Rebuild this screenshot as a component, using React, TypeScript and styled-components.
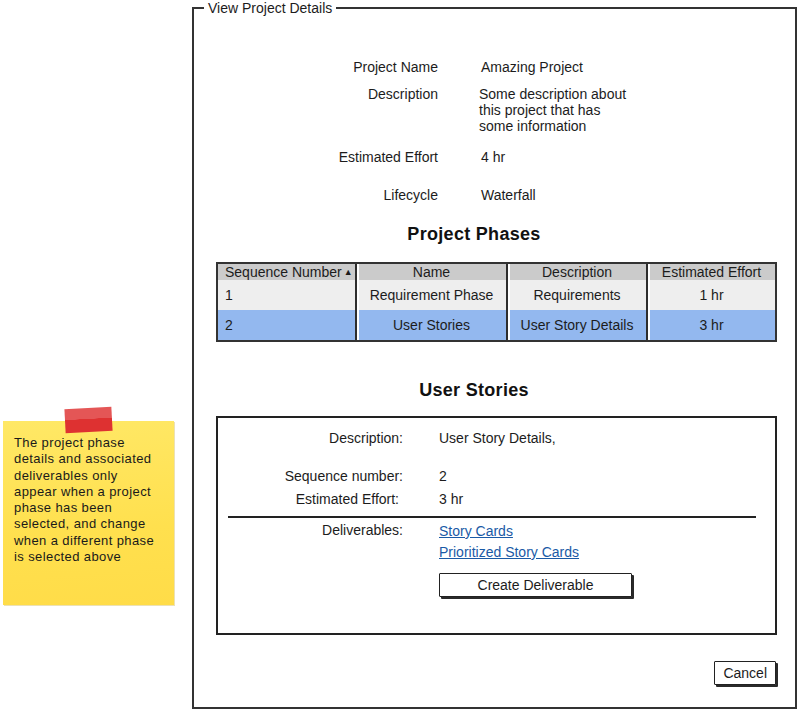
import React from 'react';
import styled, { createGlobalStyle } from 'styled-components';

const GlobalStyle = createGlobalStyle`
  html, body {
    margin: 0;
    padding: 0;
    background: #ffffff;
  }
  body {
    font-family: "Liberation Sans", Arial, sans-serif;
    font-size: 14px;
    color: #1c1c1c;
  }
`;

const phases = [
  { seq: '1', name: 'Requirement Phase', desc: 'Requirements', effort: '1 hr', selected: false },
  { seq: '2', name: 'User Stories', desc: 'User Story Details', effort: '3 hr', selected: true },
];

const noteLines = [
  'The project phase',
  'details and associated',
  'deliverables only',
  'appear when a project',
  'phase has been',
  'selected, and change',
  'when a different phase',
  'is selected above',
];

export default function App() {
  return (
    <>
      <GlobalStyle />
      <Page>
        <NoteColumn>
          <Note>
            <Tape />
            {noteLines.map((line) => (
              <NoteLine key={line}>{line}</NoteLine>
            ))}
          </Note>
        </NoteColumn>

        <Frame>
          <Legend>View Project Details</Legend>
          <FrameBody>
            <Details>
              <Label $top={43}>Project Name</Label>
              <Value $top={43}>Amazing Project</Value>

              <Label $top={11}>Description</Label>
              <Value $top={11} $shift={-2}>
                Some description about
                <br />
                this project that has
                <br />
                some information
              </Value>

              <Label $top={15}>Estimated Effort</Label>
              <Value $top={15}>4 hr</Value>

              <Label $top={22}>Lifecycle</Label>
              <Value $top={22}>Waterfall</Value>
            </Details>

            <Heading $top={21}>Project Phases</Heading>

            <Table>
              <HeadCell $left>
                Sequence Number<SortArrow>▲</SortArrow>
              </HeadCell>
              <HeadCell>Name</HeadCell>
              <HeadCell>Description</HeadCell>
              <HeadCell>Estimated Effort</HeadCell>
              {phases.map((p) => (
                <React.Fragment key={p.seq}>
                  <Cell $left $selected={p.selected}>{p.seq}</Cell>
                  <Cell $selected={p.selected}>{p.name}</Cell>
                  <Cell $selected={p.selected}>{p.desc}</Cell>
                  <Cell $selected={p.selected}>{p.effort}</Cell>
                </React.Fragment>
              ))}
            </Table>

            <Heading $top={38}>User Stories</Heading>

            <StoryBox>
              <StoryGrid>
                <Label $top={0}>Description:</Label>
                <Value $top={0}>User Story Details,</Value>

                <Label $top={22}>Sequence number:</Label>
                <Value $top={22}>2</Value>

                <Label $top={7} $shift={-4}>Estimated Effort:</Label>
                <Value $top={7}>3 hr</Value>
              </StoryGrid>

              <Divider />

              <StoryGrid>
                <Label $top={0}>Deliverables:</Label>
                <LinkList>
                  <StoryLink href="#">Story Cards</StoryLink>
                  <StoryLink href="#">Prioritized Story Cards</StoryLink>
                  <WideButton>Create Deliverable</WideButton>
                </LinkList>
              </StoryGrid>
            </StoryBox>

            <Footer>
              <Button>Cancel</Button>
            </Footer>
          </FrameBody>
        </Frame>
      </Page>
    </>
  );
}

const Page = styled.div`
  display: flex;
  width: 801px;
  height: 711px;
  overflow: hidden;
`;

const NoteColumn = styled.div`
  width: 192px;
  flex-shrink: 0;
  padding: 421px 0 0 3px;
  box-sizing: border-box;
`;

const Note = styled.div`
  position: relative;
  width: 171px;
  height: 184px;
  box-sizing: border-box;
  padding: 14px 4px 0 11px;
  background: linear-gradient(175deg, #ffe866 0%, #ffe04e 60%, #ffdc48 100%);
  box-shadow: 1px 1px 0 rgba(200, 170, 40, 0.35);
`;

const Tape = styled.div`
  position: absolute;
  left: 62px;
  top: -13px;
  width: 47px;
  height: 24px;
  transform: rotate(-3deg);
  background: linear-gradient(180deg, #e45656 0%, #e45656 45%, #de3131 46%, #de3131 100%);
`;

const NoteLine = styled.div`
  font-size: 13px;
  line-height: 16.3px;
  letter-spacing: 0.4px;
  color: #1a1a1a;
  white-space: nowrap;
`;

const Frame = styled.fieldset`
  margin: 0;
  padding: 0;
  width: 605px;
  height: 709px;
  box-sizing: border-box;
  border: 2px solid #333333;
  min-width: 0;
`;

const Legend = styled.legend`
  margin-left: 10px;
  padding: 0 4px;
  font-size: 14px;
  line-height: 16px;
  color: #1c1c1c;
`;

const FrameBody = styled.div`
  display: flex;
  flex-direction: column;
  padding: 0 18px 0 22px;
`;

const Details = styled.div`
  display: grid;
  grid-template-columns: 222px 1fr;
  column-gap: 43px;
`;

const Label = styled.div<{ $top: number; $shift?: number }>`
  margin-top: ${(p) => p.$top}px;
  margin-right: ${(p) => -(p.$shift ?? 0)}px;
  text-align: right;
  line-height: 16px;
`;

const Value = styled.div<{ $top: number; $shift?: number }>`
  margin-top: ${(p) => p.$top}px;
  margin-left: ${(p) => p.$shift ?? 0}px;
  line-height: 16px;
`;

const Heading = styled.h2<{ $top: number }>`
  margin: ${(p) => p.$top}px 45px 0 0;
  text-align: center;
  font-size: 18px;
  line-height: 20px;
  font-weight: bold;
  letter-spacing: 0.3px;
  color: #111111;
`;

const Table = styled.div`
  margin-top: 18px;
  display: grid;
  grid-template-columns: 137px 151px 140px 129px;
  grid-template-rows: 16px 30px 30px;
  border: 2px solid #333333;
`;

const HeadCell = styled.div<{ $left?: boolean }>`
  display: flex;
  align-items: center;
  justify-content: ${(p) => (p.$left ? 'flex-start' : 'center')};
  padding-left: ${(p) => (p.$left ? '7px' : '0')};
  background: #cbcbcb;
  line-height: 16px;
  white-space: nowrap;
  overflow: hidden;
  border-left: ${(p) => (p.$left ? 'none' : '2px solid #2e2e2e')};
  box-shadow: ${(p) => (p.$left ? 'none' : 'inset 2px 0 0 #ffffff')};
`;

const SortArrow = styled.span`
  font-size: 9px;
  margin-left: 2px;
  line-height: 16px;
`;

const Cell = styled.div<{ $left?: boolean; $selected: boolean }>`
  display: flex;
  align-items: center;
  justify-content: ${(p) => (p.$left ? 'flex-start' : 'center')};
  padding-left: ${(p) => (p.$left ? '7px' : '0')};
  background: ${(p) => (p.$selected ? '#93b8ef' : '#eeeeee')};
  white-space: nowrap;
  border-left: ${(p) => (p.$left ? 'none' : '2px solid #2e2e2e')};
  box-shadow: ${(p) => (p.$left ? 'none' : 'inset 2px 0 0 #ffffff')};
`;

const StoryBox = styled.div`
  margin-top: 16px;
  height: 219px;
  box-sizing: border-box;
  border: 2px solid #222222;
  padding-top: 12px;
`;

const StoryGrid = styled.div`
  display: grid;
  grid-template-columns: 185px 1fr;
  column-gap: 36px;
  align-items: start;
`;

const Divider = styled.hr`
  margin: 9px 19px 4px 10px;
  border: none;
  border-top: 2px solid #222222;
  height: 0;
`;

const LinkList = styled.div`
  display: flex;
  flex-direction: column;
  align-items: flex-start;
  gap: 5px;
  margin-top: 1px;
`;

const StoryLink = styled.a`
  color: #1a5aa6;
  text-decoration: underline;
  line-height: 16px;
`;

const Button = styled.button`
  font-family: "Liberation Sans", Arial, sans-serif;
  font-size: 14px;
  color: #1c1c1c;
  background: #ffffff;
  border: 1.5px solid #222222;
  border-radius: 1px;
  box-shadow: 2px 2px 0 #2a2a2a;
  height: 24px;
  padding: 0 8px;
  cursor: pointer;
`;

const WideButton = styled(Button)`
  width: 193px;
  height: 24px;
  margin-top: 8px;
`;

const Footer = styled.div`
  display: flex;
  justify-content: flex-end;
  margin-top: 26px;
  padding-right: 1px;
`;
